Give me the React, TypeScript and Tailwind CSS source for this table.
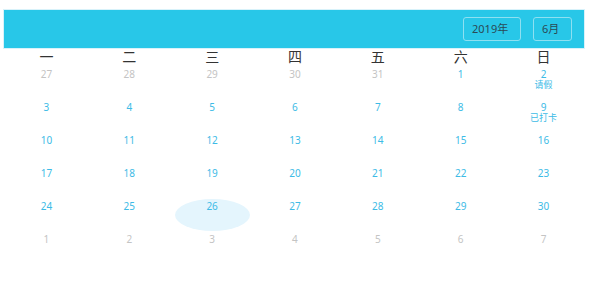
const weekdays = ["一", "二", "三", "四", "五", "六", "日"]

type Day = { n: number; cur: boolean; note?: string; selected?: boolean }

function buildDays(): Day[] {
  const days: Day[] = []
  for (let d = 27; d <= 31; d++) days.push({ n: d, cur: false })
  for (let d = 1; d <= 30; d++) days.push({ n: d, cur: true })
  for (let d = 1; d <= 7; d++) days.push({ n: d, cur: false })
  days[6].note = "请假"
  days[13].note = "已打卡"
  days[30].selected = true
  return days
}

export default function App() {
  const days = buildDays()
  const rows: Day[][] = []
  for (let i = 0; i < days.length; i += 7) rows.push(days.slice(i, i + 7))

  return (
    <div
      className="w-[590px] h-[300px] bg-white pl-[3px] pt-[9px]"
      style={{ fontFamily: '"Noto Sans", "Noto Sans CJK SC", sans-serif' }}
    >
      <div className="w-[582px]">
        <div className="h-[40px] bg-[#28c7e8] border border-[#d8f2fa] flex items-center justify-end gap-[12px] pr-[12px]">
          <div className="w-[58px] h-[24px] rounded-[3px] border border-[#8ee0f1] text-[11px] leading-[22px] text-[#2b4a55] pl-[8px]">
            2019年
          </div>
          <div className="w-[39px] h-[24px] rounded-[3px] border border-[#8ee0f1] text-[11px] leading-[22px] text-[#2b4a55] pl-[8px]">
            6月
          </div>
        </div>

        <div className="grid grid-cols-7 pl-[2px] mb-[2px]">
          {weekdays.map((w) => (
            <div key={w} className="text-center text-[14px] leading-[16px] text-[#333]">
              {w}
            </div>
          ))}
        </div>

        {rows.map((row, ri) => (
          <div key={ri} className="grid grid-cols-7 pl-[2px] h-[33px]">
            {row.map((d, di) => (
              <div key={di} className="flex justify-center">
                <div
                  className={
                    "w-[75px] h-[32px] rounded-[50%] flex flex-col items-center pt-[2px] " +
                    (d.selected ? "bg-[#e4f5fd]" : "")
                  }
                >
                  <span
                    className={
                      "text-[10px] leading-[10px] " + (d.cur ? "text-[#3dbbe6]" : "text-[#c4c4c4]")
                    }
                  >
                    {d.n}
                  </span>
                  {d.note && (
                    <span className="text-[9px] leading-[9px] mt-[1px] text-[#3dbbe6]">{d.note}</span>
                  )}
                </div>
              </div>
            ))}
          </div>
        ))}
      </div>
    </div>
  )
}
